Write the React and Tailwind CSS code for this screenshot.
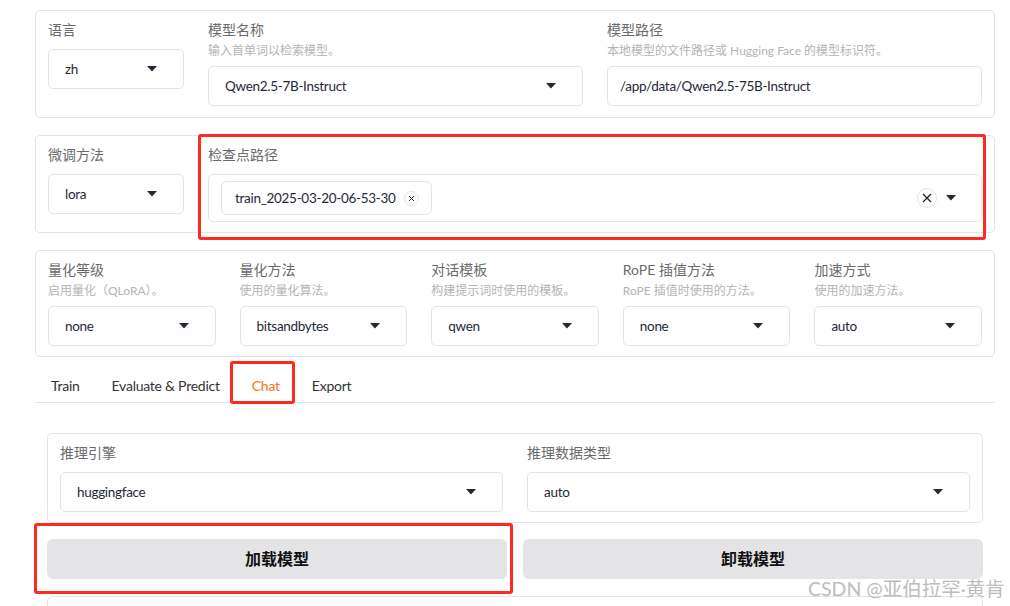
import React from "react";

const FONT = {
  fontFamily: 'Lato, "Noto Sans CJK SC", sans-serif',
};

// small filled caret used by every dropdown
const Caret = () => (
  <svg width="10" height="6" viewBox="0 0 10 6" className="shrink-0">
    <path d="M0 0 L10 0 L5 5.5 Z" fill="#1f2937" />
  </svg>
);

const Dropdown = ({ value, className = "" }) => (
  <div
    className={`h-[40px] flex items-center justify-between pl-[16px] pr-[26px] border border-[#e4e4e7] rounded-[5px] bg-white text-[13.5px] tracking-[-0.3px] text-[#1f2937] ${className}`}
  >
    <span>{value}</span>
    <Caret />
  </div>
);

const TextBox = ({ value }) => (
  <div className="h-[40px] flex items-center px-[12px] border border-[#e4e4e7] rounded-[5px] bg-white text-[13.5px] tracking-[-0.3px] text-[#1f2937]">
    {value}
  </div>
);

const Label = ({ children }) => (
  <div className="h-[20px] leading-[20px] text-[14px] text-[#6b6b6b]">{children}</div>
);

const Hint = ({ children }) => (
  <div className="mt-[2px] h-[18px] leading-[18px] text-[12px] text-[#b4b4b4]">
    {children}
  </div>
);

const Panel = ({ children, className = "" }) => (
  <div className={`border border-[#e4e4e7] rounded-[5px] bg-white ${className}`}>
    {children}
  </div>
);

// field with label, optional hint, then control
const Field = ({ label, hint, children, className = "" }) => (
  <div className={`flex flex-col ${className}`}>
    <Label>{label}</Label>
    {hint && <Hint>{hint}</Hint>}
    <div className={hint ? "mt-[6px]" : "mt-[9px]"}>{children}</div>
  </div>
);

const quantFields = [
  { label: "量化等级", hint: "启用量化（QLoRA）。", value: "none" },
  { label: "量化方法", hint: "使用的量化算法。", value: "bitsandbytes" },
  { label: "对话模板", hint: "构建提示词时使用的模板。", value: "qwen" },
  { label: "RoPE 插值方法", hint: "RoPE 插值时使用的方法。", value: "none" },
  { label: "加速方式", hint: "使用的加速方法。", value: "auto" },
];

const tabs = ["Train", "Evaluate & Predict", "Chat", "Export"];

const App = () => {
  return (
    <div
      className="relative w-[1010px] h-[606px] overflow-hidden bg-white"
      style={FONT}
    >
      <div className="pl-[35px] pr-[15px] pt-[10px] flex flex-col">
        {/* Model row */}
        <Panel className="flex gap-[24px] pl-[12px] pr-[12px] pt-[9px] pb-[10px] h-[108px]">
          <Field label="语言" className="w-[136px]">
            <Dropdown value="zh" />
          </Field>
          <Field label="模型名称" hint="输入首单词以检索模型。" className="flex-1">
            <Dropdown value="Qwen2.5-7B-Instruct" />
          </Field>
          <Field
            label="模型路径"
            hint="本地模型的文件路径或 Hugging Face 的模型标识符。"
            className="flex-1"
          >
            <TextBox value="/app/data/Qwen2.5-75B-Instruct" />
          </Field>
        </Panel>

        {/* Finetune row */}
        <Panel className="mt-[17px] flex gap-[24px] pl-[12px] pr-[12px] pt-[9px] pb-[10px]">
          <Field label="微调方法" className="w-[136px]">
            <Dropdown value="lora" />
          </Field>
          <Field label="检查点路径" className="flex-1">
            <div className="h-[48px] flex items-center justify-between pl-[12px] pr-[25px] border border-[#e4e4e7] rounded-[5px]">
              <div className="h-[34px] flex items-center gap-[8px] pl-[13px] pr-[12px] border border-[#e4e4e7] rounded-[6px] text-[13.5px] tracking-[-0.3px] text-[#1f2937]">
                <span>train_2025-03-20-06-53-30</span>
                <span className="w-[15px] h-[15px] rounded-full border border-[#e4e4e7] flex items-center justify-center">
                  <svg width="7" height="7" viewBox="0 0 7 7">
                    <path d="M1 1 L6 6 M6 1 L1 6" stroke="#333" strokeWidth="1" />
                  </svg>
                </span>
              </div>
              <div className="flex items-center gap-[9px]">
                <span className="w-[20px] h-[20px] rounded-full border border-[#e4e4e7] flex items-center justify-center">
                  <svg width="10" height="10" viewBox="0 0 10 10">
                    <path d="M1 1 L9 9 M9 1 L1 9" stroke="#222" strokeWidth="1.3" />
                  </svg>
                </span>
                <Caret />
              </div>
            </div>
          </Field>
        </Panel>

        {/* Quantization row */}
        <Panel className="mt-[17px] grid grid-cols-5 gap-[24px] pl-[12px] pr-[12px] pt-[9px] pb-[10px]">
          {quantFields.map((f) => (
            <Field key={f.label} label={f.label} hint={f.hint}>
              <Dropdown value={f.value} />
            </Field>
          ))}
        </Panel>

        {/* Tabs */}
        <div className="mt-[12px] flex h-[34px] border-b border-[#e4e4e7]">
          {tabs.map((t) => (
            <div
              key={t}
              className={`px-[16px] flex items-center text-[14px] tracking-[-0.25px] ${
                t === "Chat" ? "text-[#f97316]" : "text-[#333]"
              }`}
            >
              {t}
            </div>
          ))}
        </div>

        {/* Chat panel */}
        <div className="px-[12px] pt-[30px] flex flex-col">
          <Panel className="grid grid-cols-2 gap-[24px] pl-[12px] pr-[12px] pt-[9px] pb-[10px]">
            <Field label="推理引擎">
              <Dropdown value="huggingface" />
            </Field>
            <Field label="推理数据类型">
              <Dropdown value="auto" />
            </Field>
          </Panel>

          <div className="mt-[16px] grid grid-cols-2 gap-[16px]">
            <button className="h-[40px] rounded-[6px] bg-[#e4e4e7] text-[16px] font-bold text-[#111]">
              加载模型
            </button>
            <button className="h-[40px] rounded-[6px] bg-[#e4e4e7] text-[16px] font-bold text-[#111]">
              卸载模型
            </button>
          </div>

          <Panel className="mt-[17px] h-[60px] px-[12px] pt-[9px]">
            <div className="h-[40px] border border-[#e4e4e7] rounded-[5px]" />
          </Panel>
        </div>
      </div>

      {/* red annotation boxes */}
      <div className="absolute left-[198px] top-[134px] w-[788px] h-[106px] border-[3px] border-[#ff2a1f] rounded-[3px]" />
      <div className="absolute left-[230px] top-[361px] w-[65px] h-[43px] border-[3px] border-[#ff2a1f] rounded-[3px]" />
      <div className="absolute left-[34px] top-[523px] w-[479px] h-[71px] border-[3px] border-[#ff2a1f] rounded-[3px]" />

      {/* watermark */}
      <div className="absolute left-[808px] top-[576px] text-[19.5px] leading-[26px] text-[#bdbdbd] whitespace-nowrap">
        CSDN @亚伯拉罕·黄肯
      </div>
    </div>
  );
};

export default App;
